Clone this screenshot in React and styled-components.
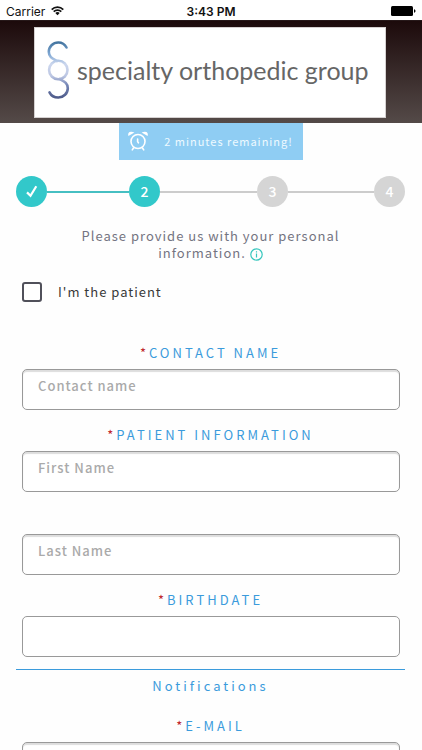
import styled, { createGlobalStyle } from 'styled-components';

const GlobalStyle = createGlobalStyle`
  * {
    box-sizing: border-box;
  }

  body {
    margin: 0;
    background-color: #fefefe;
    color: #444;
    font-family: 'Noto Sans CJK JP', 'Open Sans', sans-serif;
    font-size: 13px;
    letter-spacing: 1px;
    scrollbar-width: none;
  }
`;

const StatusBar = styled.div`
  display: grid;
  grid-template-columns: 1fr auto 1fr;
  align-items: center;
  height: 20px;
  padding: 2px 6px 0;
  background-color: #fff;
  color: #111;
  font-family: Inter, Roboto, sans-serif;
  font-size: 12px;
  letter-spacing: 0;
`;

const Carrier = styled.span`
  display: flex;
  align-items: center;
  gap: 6px;
`;

const Clock = styled.time`
  font-weight: 600;
`;

const Battery = styled.svg`
  justify-self: end;
`;

const Header = styled.header`
  padding: 6px 36px 5px 34px;
  border-top: 1px solid #261819;
  background: linear-gradient(#1c0a0b, #544a48);
`;

const Logo = styled.a`
  display: flex;
  align-items: center;
  gap: 7px;
  height: 91px;
  padding: 0 12px 6px;
  border: 1px solid #d5d1d1;
  background-color: #fff;
  color: #666;
  font-family: Lato, sans-serif;
  font-size: 25px;
  letter-spacing: 0;
  text-decoration: none;
  white-space: nowrap;
`;

const Banner = styled.div`
  display: flex;
  align-items: center;
  gap: 16px;
  width: fit-content;
  height: 37px;
  margin: 0 auto;
  padding: 0 10px 2px 9px;
  background-color: #8fcdf3;
  color: #eefaff;
  font-size: 11px;
`;

const Main = styled.main`
  padding: 16px 17px 0 16px;
`;

const Steps = styled.ol`
  display: flex;
  align-items: center;
  margin: 0;
  padding: 0;
  list-style: none;
`;

const Step = styled.li`
  display: flex;
  align-items: center;
  flex: ${({ $span }) => $span} 1 auto;

  &:not(:last-child)::after {
    content: '';
    flex: 1;
    height: 2px;
    background-color: ${({ $passed }) => ($passed ? '#46bfc2' : '#ccc')};
  }
`;

const Circle = styled.span`
  display: flex;
  align-items: center;
  justify-content: center;
  width: 31px;
  height: 31px;
  padding-bottom: 2px;
  border-radius: 50%;
  background-color: ${({ $active }) => ($active ? '#32c8ca' : '#d5d5d5')};
  color: #fff;
  font-size: 14px;
  font-weight: 500;
  letter-spacing: 0;

  svg {
    margin-top: 2px;
  }
`;

const Intro = styled.p`
  max-width: 290px;
  margin: 20px auto 0;
  color: #747481;
  line-height: 17px;
  text-align: center;

  svg {
    vertical-align: -3px;
  }
`;

const CheckLabel = styled.label`
  display: flex;
  align-items: center;
  gap: 16px;
  width: fit-content;
  margin: 20px 6px 0;
  color: #383838;
  line-height: 22px;
`;

const Checkbox = styled.input`
  appearance: none;
  width: 20px;
  height: 20px;
  margin: 0;
  border: 2px solid #50505a;
  border-radius: 3px;
  background-color: #fff;

  &:checked {
    background-color: #32c8ca;
  }
`;

const Form = styled.form`
  padding-top: 37px;
`;

const Label = styled.label`
  display: block;
  height: 29px;
  color: #3b9bdc;
  letter-spacing: 3px;
  line-height: 26px;
  text-align: center;
`;

const Required = styled.span`
  color: #c0282d;
`;

const Input = styled.input`
  display: block;
  width: calc(100% - 11px);
  height: 41px;
  margin: 0 5px 12px 6px;
  padding: 0 15px 8px;
  border: 1px solid #999;
  border-radius: 5px;
  background-color: #fff;
  box-shadow: ${({ $flat }) => ($flat ? 'none' : 'inset 0 2px 1px #ddd')};
  color: #444;
  font: inherit;
  font-weight: 500;
  letter-spacing: 1px;

  &::placeholder {
    color: #aaa;
    opacity: 1;
  }
`;

const LastName = styled.div`
  padding-top: 30px;
`;

const SectionTitle = styled.h2`
  height: 44px;
  margin: 0;
  border-top: 1px solid #3b9bdc;
  color: #3b9bdc;
  font-size: 13px;
  font-weight: 400;
  letter-spacing: 3px;
  line-height: 32px;
  text-align: center;
`;

const steps = [
  { number: 1, span: 82, active: true, passed: true },
  { number: 2, span: 97, active: true },
  { number: 3, span: 86 },
  { number: 4, span: 0 },
];

function WifiIcon() {
  return (
    <svg width="13" height="10" viewBox="0 0 13 10" fill="none" stroke="#111" strokeWidth="1.7">
      <path d="M.7 3.6a8.2 8.2 0 0 1 11.6 0M2.7 5.7a5.4 5.4 0 0 1 7.6 0" />
      <path d="M6.5 9.3 4.3 7.1a3.1 3.1 0 0 1 4.4 0Z" fill="#111" stroke="none" />
    </svg>
  );
}

function LogoMark() {
  return (
    <svg width="23" height="58" viewBox="0 0 23 58" fill="none" strokeWidth="2.6" strokeLinecap="round">
      <defs>
        <linearGradient id="mark" x1="0" y1="0" x2="0" y2="58" gradientUnits="userSpaceOnUse">
          <stop offset="0" stopColor="#3d6f9a" />
          <stop offset=".22" stopColor="#7da6d2" />
          <stop offset=".4" stopColor="#ccd7ee" />
          <stop offset=".6" stopColor="#bdc7e3" />
          <stop offset=".76" stopColor="#7485b5" />
          <stop offset="1" stopColor="#4b5786" />
        </linearGradient>
      </defs>
      <g stroke="url(#mark)">
        <path d="M19.5 6.5C17.8 3.3 14.800 1.500 11.300 1.500C6 1.500 1.800 5.600 1.800 10.800C1.800 16.500 6 17.800 10 20" />
        <circle cx="11.3" cy="29" r="9.2" />
        <path d="M12.600 38C16.600 40.200 20.800 41.500 20.800 47.200C20.800 52.400 16.600 56.500 11.300 56.500C7.500 56.500 4.100 54.500 2.500 51.300" />
      </g>
    </svg>
  );
}

function AlarmIcon() {
  return (
    <svg width="20" height="20" viewBox="0 0 20 20" fill="none" stroke="#fff" strokeWidth="1.6" strokeLinecap="round">
      <circle cx="10" cy="10.5" r="7" />
      <path d="M9.6 8v2.6l.8 1.2M5.5 17l-1.2 1.9M14.5 17l1.2 1.9" />
      <path d="M1 3.7C.8 2 2.5 1 4.5 1.7ZM19 3.7c.2-1.7-1.5-2.7-3.5-2Z" fill="#fff" />
    </svg>
  );
}

function CheckIcon() {
  return (
    <svg width="12" height="13" viewBox="0 0 12 13" fill="none" stroke="#fff" strokeWidth="2.2">
      <path d="m1 7.4 3.5 3.4L10.3 1.3" />
    </svg>
  );
}

function InfoIcon() {
  return (
    <svg width="13" height="13" viewBox="0 0 13 13" fill="none" stroke="#36c6bd" strokeWidth="1.2">
      <circle cx="6.5" cy="6.5" r="5.7" />
      <path d="M6.5 5.4v4.1M6.5 3.3v1.2" />
    </svg>
  );
}

function Field({ id, label, ...props }) {
  return (
    <div>
      <Label htmlFor={id}>
        <Required>*</Required>
        {label}
      </Label>
      <Input id={id} {...props} />
    </div>
  );
}

function App() {
  return (
    <>
      <GlobalStyle />
      <StatusBar>
        <Carrier>
          Carrier
          <WifiIcon />
        </Carrier>
        <Clock>3:43 PM</Clock>
        <Battery width="25" height="10" viewBox="0 0 25 10" fill="#000">
          <rect width="22" height="10" rx="1.5" />
          <path d="M23 3.3c2 .4 2 3 0 3.4Z" />
        </Battery>
      </StatusBar>
      <Header>
        <Logo href="#">
          <LogoMark />
          specialty orthopedic group
        </Logo>
      </Header>
      <Banner>
        <AlarmIcon />
        2 minutes remaining!
      </Banner>
      <Main>
        <Steps>
          {steps.map(({ number, span, active, passed }) => (
            <Step key={number} $span={span} $passed={passed}>
              <Circle $active={active}>{passed ? <CheckIcon /> : number}</Circle>
            </Step>
          ))}
        </Steps>
        <Intro>
          Please provide us with your personal information. <InfoIcon />
        </Intro>
        <CheckLabel>
          <Checkbox type="checkbox" />
          I'm the patient
        </CheckLabel>
        <Form>
          <Field id="contact" label="CONTACT NAME" placeholder="Contact name" />
          <Field id="first-name" label="PATIENT INFORMATION" placeholder="First Name" />
          <LastName>
            <Input aria-label="Last Name" placeholder="Last Name" />
          </LastName>
          <Field id="birthdate" label="BIRTHDATE" $flat />
          <SectionTitle>Notifications</SectionTitle>
          <Field id="email" label="E-MAIL" type="email" />
        </Form>
      </Main>
    </>
  );
}

export default App;
